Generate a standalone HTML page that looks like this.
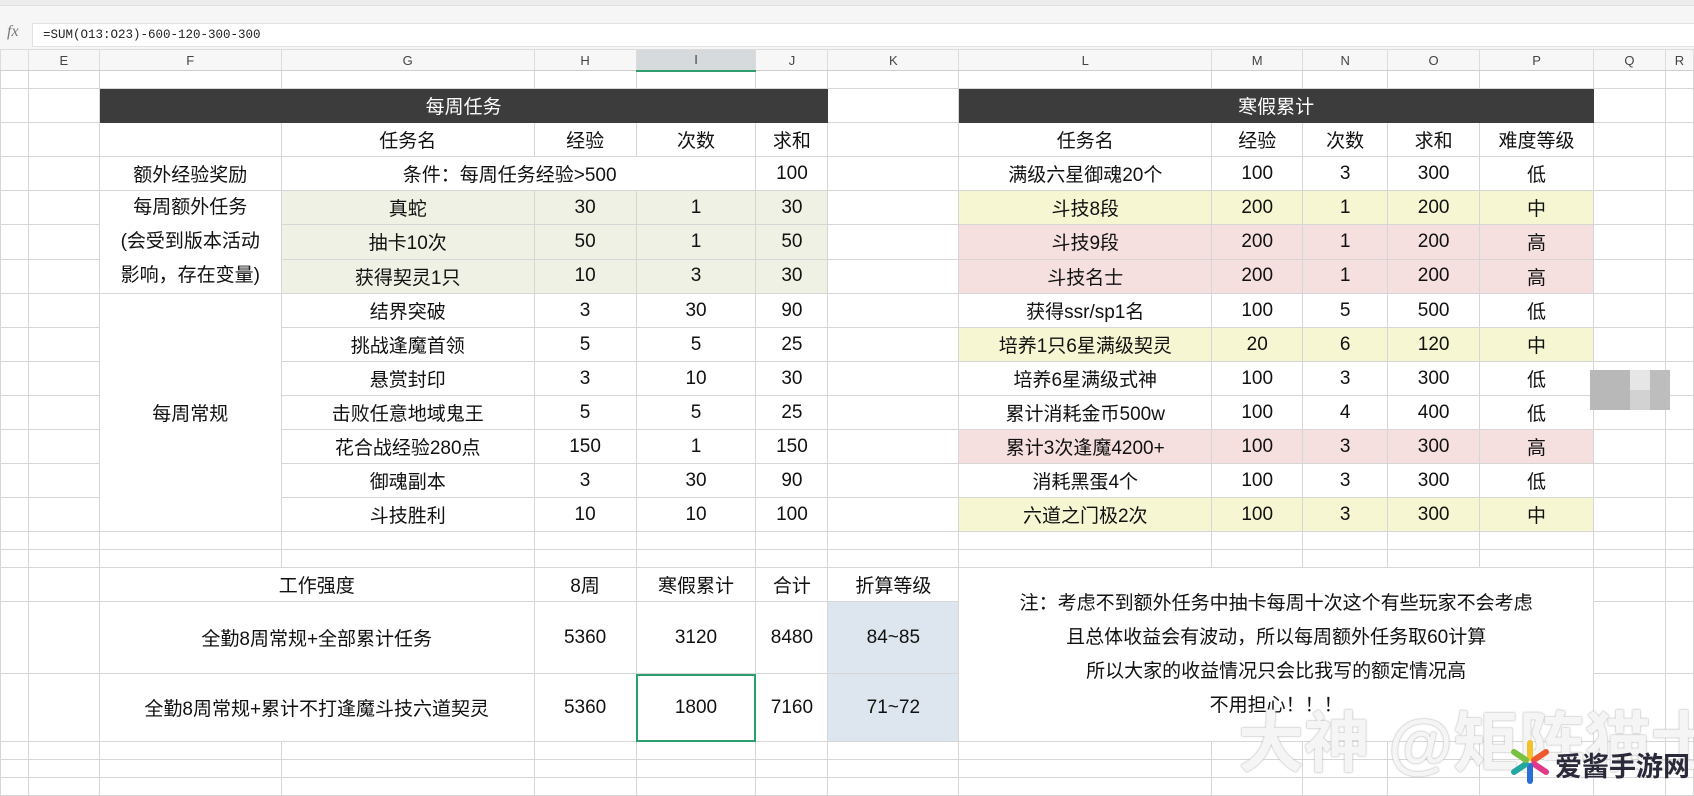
<!DOCTYPE html>
<html><head><meta charset="utf-8">
<style>
*{margin:0;padding:0;box-sizing:border-box}
body{width:1694px;height:791px;overflow:hidden;background:#fff;position:relative;font-family:"Liberation Sans","Noto Sans CJK SC",sans-serif;color:#111}
.top{position:absolute;left:0;top:0;width:1694px;height:6px;background:#ececec;border-bottom:1px solid #e0e0e0}
.fbar{position:absolute;left:0;top:6px;width:1694px;height:43px;background:#f6f6f6}
.fx{position:absolute;left:7px;top:17px;font-family:"Liberation Serif",serif;font-style:italic;font-size:16px;color:#777}
.fbox{position:absolute;left:32px;top:17px;width:1662px;height:24px;background:#fff;border:1px solid #e2e2e2;border-right:none;font-family:"Liberation Mono",monospace;font-size:12.5px;line-height:22px;padding-left:10px;color:#222}
table{position:absolute;left:0;top:49px;border-collapse:collapse;table-layout:fixed}
td{border:1px solid #d6d6d6;text-align:center;vertical-align:middle;font-size:19px;padding:0;white-space:nowrap;overflow:visible}
tr.ch td{background:#f7f7f7;font-size:13px;color:#444;border-color:#dcdcdc;border-bottom:1px solid #cfcfcf}
tr.ch td.sel{background:#d7dadd;border-bottom:2px solid #2e9e6e}
.t{background:#3c3c3c;color:#fff;border-color:#3c3c3c}
.g{background:#eef1e4}
.y{background:#f6f6d2}
.p{background:#f5dfdf}
.b{background:#dde6ee}
.w{background:#fff}
.note{line-height:34px;font-size:19px}
.sel2{outline:2px solid #2e9e6e;outline-offset:-2px}
.wm{position:absolute;left:1238px;top:690px;font-size:66px;font-weight:bold;color:rgba(255,255,255,.85);text-shadow:0 0 2px #bbb,0 0 1px #aaa;white-space:nowrap;font-family:"Liberation Sans","Noto Sans CJK SC",sans-serif}
.logo{position:absolute;left:1555px;top:745px;font-size:27px;font-weight:bold;color:#2a2a3a;font-family:"Noto Sans CJK SC",sans-serif;letter-spacing:0px}
.blur{position:absolute;left:1590px;top:370px;width:80px;height:40px}
</style></head><body>
<div class="top"></div>
<div class="fbar"><span class="fx">fx</span><div class="fbox">=SUM(O13:O23)-600-120-300-300</div></div>
<table>
<colgroup><col style="width:28px"><col style="width:71px"><col style="width:182px"><col style="width:253px"><col style="width:102px"><col style="width:120px"><col style="width:72px"><col style="width:131px"><col style="width:253px"><col style="width:91px"><col style="width:85px"><col style="width:92px"><col style="width:114px"><col style="width:72px"><col style="width:28px"></colgroup>
<tr class="ch" style="height:21px"><td></td><td>E</td><td>F</td><td>G</td><td>H</td><td class="sel">I</td><td>J</td><td>K</td><td>L</td><td>M</td><td>N</td><td>O</td><td>P</td><td>Q</td><td>R</td></tr>
<tr style="height:18px"><td></td><td></td><td></td><td></td><td></td><td></td><td></td><td></td><td></td><td></td><td></td><td></td><td></td><td></td><td></td></tr>
<tr style="height:34px"><td></td><td></td><td colspan="5" class="t">每周任务</td><td></td><td colspan="5" class="t">寒假累计</td><td></td><td></td></tr>
<tr style="height:34px"><td></td><td></td><td></td><td>任务名</td><td>经验</td><td>次数</td><td>求和</td><td></td><td>任务名</td><td>经验</td><td>次数</td><td>求和</td><td>难度等级</td><td></td><td></td></tr>
<tr style="height:34px"><td></td><td></td><td>额外经验奖励</td><td colspan="3" style="text-align:left;padding-left:121px">条件：每周任务经验&gt;500</td><td>100</td><td></td><td>满级六星御魂20个</td><td>100</td><td>3</td><td>300</td><td>低</td><td></td><td></td></tr>
<tr style="height:34px"><td></td><td></td><td rowspan="3" class="w note">每周额外任务<br>(会受到版本活动<br>影响，存在变量)</td><td class="g">真蛇</td><td class="g">30</td><td class="g">1</td><td class="g">30</td><td></td><td class="y">斗技8段</td><td class="y">200</td><td class="y">1</td><td class="y">200</td><td class="y">中</td><td></td><td></td></tr>
<tr style="height:34px"><td></td><td></td><td class="g">抽卡10次</td><td class="g">50</td><td class="g">1</td><td class="g">50</td><td></td><td class="p">斗技9段</td><td class="p">200</td><td class="p">1</td><td class="p">200</td><td class="p">高</td><td></td><td></td></tr>
<tr style="height:34px"><td></td><td></td><td class="g">获得契灵1只</td><td class="g">10</td><td class="g">3</td><td class="g">30</td><td></td><td class="p">斗技名士</td><td class="p">200</td><td class="p">1</td><td class="p">200</td><td class="p">高</td><td></td><td></td></tr>
<tr style="height:34px"><td></td><td></td><td rowspan="7" class="w">每周常规</td><td>结界突破</td><td>3</td><td>30</td><td>90</td><td></td><td>获得ssr/sp1名</td><td>100</td><td>5</td><td>500</td><td>低</td><td></td><td></td></tr>
<tr style="height:34px"><td></td><td></td><td>挑战逢魔首领</td><td>5</td><td>5</td><td>25</td><td></td><td class="y">培养1只6星满级契灵</td><td class="y">20</td><td class="y">6</td><td class="y">120</td><td class="y">中</td><td></td><td></td></tr>
<tr style="height:34px"><td></td><td></td><td>悬赏封印</td><td>3</td><td>10</td><td>30</td><td></td><td>培养6星满级式神</td><td>100</td><td>3</td><td>300</td><td>低</td><td></td><td></td></tr>
<tr style="height:34px"><td></td><td></td><td>击败任意地域鬼王</td><td>5</td><td>5</td><td>25</td><td></td><td>累计消耗金币500w</td><td>100</td><td>4</td><td>400</td><td>低</td><td></td><td></td></tr>
<tr style="height:34px"><td></td><td></td><td>花合战经验280点</td><td>150</td><td>1</td><td>150</td><td></td><td class="p">累计3次逢魔4200+</td><td class="p">100</td><td class="p">3</td><td class="p">300</td><td class="p">高</td><td></td><td></td></tr>
<tr style="height:34px"><td></td><td></td><td>御魂副本</td><td>3</td><td>30</td><td>90</td><td></td><td>消耗黑蛋4个</td><td>100</td><td>3</td><td>300</td><td>低</td><td></td><td></td></tr>
<tr style="height:34px"><td></td><td></td><td>斗技胜利</td><td>10</td><td>10</td><td>100</td><td></td><td class="y">六道之门极2次</td><td class="y">100</td><td class="y">3</td><td class="y">300</td><td class="y">中</td><td></td><td></td></tr>
<tr style="height:18px"><td></td><td></td><td></td><td></td><td></td><td></td><td></td><td></td><td></td><td></td><td></td><td></td><td></td><td></td><td></td></tr>
<tr style="height:18px"><td></td><td></td><td></td><td></td><td></td><td></td><td></td><td></td><td></td><td></td><td></td><td></td><td></td><td></td><td></td></tr>
<tr style="height:34px"><td></td><td></td><td colspan="2" class="w">工作强度</td><td>8周</td><td>寒假累计</td><td>合计</td><td>折算等级</td><td colspan="5" rowspan="3" class="w note">注：考虑不到额外任务中抽卡每周十次这个有些玩家不会考虑<br>且总体收益会有波动，所以每周额外任务取60计算<br>所以大家的收益情况只会比我写的额定情况高<br>不用担心！！！</td><td></td><td></td></tr>
<tr style="height:72px"><td></td><td></td><td colspan="2" class="w">全勤8周常规+全部累计任务</td><td>5360</td><td>3120</td><td>8480</td><td class="b">84~85</td><td></td><td></td></tr>
<tr style="height:68px"><td></td><td></td><td colspan="2" class="w">全勤8周常规+累计不打逢魔斗技六道契灵</td><td>5360</td><td class="sel2">1800</td><td>7160</td><td class="b">71~72</td><td></td><td></td></tr>
<tr style="height:18px"><td></td><td></td><td></td><td></td><td></td><td></td><td></td><td></td><td></td><td></td><td></td><td></td><td></td><td></td><td></td></tr>
<tr style="height:18px"><td></td><td></td><td></td><td></td><td></td><td></td><td></td><td></td><td></td><td></td><td></td><td></td><td></td><td></td><td></td></tr>
<tr style="height:18px"><td></td><td></td><td></td><td></td><td></td><td></td><td></td><td></td><td></td><td></td><td></td><td></td><td></td><td></td><td></td></tr>
</table>
<div class="blur"><div style="position:absolute;left:0;top:0;width:40px;height:40px;background:#b8b8b8"></div><div style="position:absolute;left:40px;top:0;width:20px;height:20px;background:#e6e6e6"></div><div style="position:absolute;left:40px;top:20px;width:20px;height:20px;background:#d2d2d2"></div><div style="position:absolute;left:60px;top:0;width:20px;height:40px;background:#bdbdbd"></div></div>
<div class="wm">大神 @矩阵猫士</div>
<svg style="position:absolute;left:1508px;top:740px" width="44" height="44" viewBox="-22 -22 44 44">
<g stroke-linecap="round" stroke-width="6">
<line x1="0" y1="-4" x2="0" y2="-19" stroke="#f5c12b"/>
<line x1="4" y1="-2" x2="16" y2="-10" stroke="#ee5a2f"/>
<line x1="4" y1="2" x2="16" y2="10" stroke="#e23a8a"/>
<line x1="0" y1="4" x2="0" y2="19" stroke="#2a6fd6"/>
<line x1="-4" y1="2" x2="-16" y2="10" stroke="#22a8a0"/>
<line x1="-4" y1="-2" x2="-16" y2="-10" stroke="#7ac142"/>
</g></svg>
<div class="logo">爱酱手游网</div>
</body></html>
